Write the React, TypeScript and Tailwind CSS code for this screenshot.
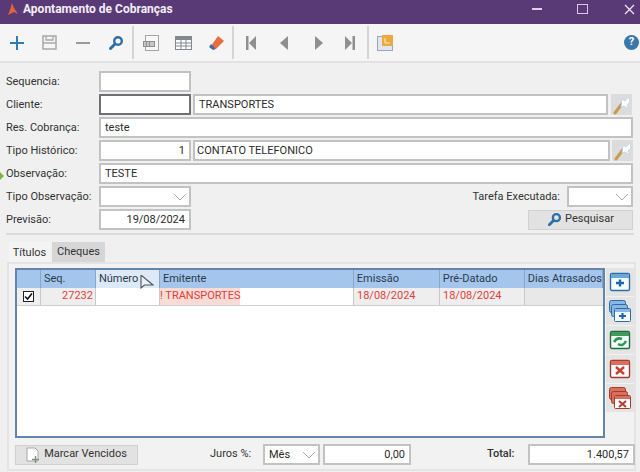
import type { ReactNode } from 'react';

function Sep({ className = '' }: { className?: string }) {
  return <div className={`h-[33px] w-[2px] shrink-0 bg-[#d4d4d4] ${className}`} />;
}

function ToolBtn({ children, className = 'w-[33px]' }: { children: ReactNode; className?: string }) {
  return <div className={`flex h-[37px] shrink-0 items-center justify-center ${className}`}>{children}</div>;
}

function Lupa({ size = 16, color = '#2f6ea5' }: { size?: number; color?: string }) {
  return (
    <svg width={size} height={size} viewBox="0 0 16 16">
      <circle cx="10" cy="6" r="3.8" fill="none" stroke={color} strokeWidth="2.4" />
      <path d="M7 9 L2.5 13.5" stroke={color} strokeWidth="3" strokeLinecap="round" />
    </svg>
  );
}

function Wand() {
  return (
    <div className="flex h-[21px] w-[21px] shrink-0 items-center justify-center bg-[#dcdcdc]">
      <svg width="20" height="20" viewBox="0 0 20 20">
        <path d="M3 18 L9 10" stroke="#c99a52" strokeWidth="3" strokeLinecap="round" />
        <path d="M9 10 L12 7" stroke="#7d8fa6" strokeWidth="3" />
        <path d="M10 4 L13 6 L17 2 L18 7 L15 10 L17 14 L12 11 L9 12 Z" fill="#ffffff" stroke="#b9d2ea" strokeWidth="0.8" />
      </svg>
    </div>
  );
}

function Chevron({ color = '#a9a9a9' }: { color?: string }) {
  return (
    <svg width="14" height="8" viewBox="0 0 14 8">
      <path d="M1 1 L7 7 L13 1" fill="none" stroke={color} strokeWidth="1" />
    </svg>
  );
}

function Field({
  children,
  className = '',
  border = 'border-[#c2c2c2]',
}: {
  children?: ReactNode;
  className?: string;
  border?: string;
}) {
  return (
    <div className={`flex h-full items-center border-2 bg-white px-[4px] pt-[1px] text-[#2b2b2b] ${border} ${className}`}>
      {children}
    </div>
  );
}

function Row({ label, children }: { label: string; children: ReactNode }) {
  return (
    <div className="relative flex h-[21px] items-center">
      <div className="w-[93px] shrink-0 pt-[2px] text-[#333]">{label}</div>
      {children}
    </div>
  );
}

function SideBtn({ children }: { children: ReactNode }) {
  return <div className="flex h-[28px] w-[28px] items-center justify-center bg-[#e4e4e4]">{children}</div>;
}

function WinIcon({ color, bar, children }: { color: string; bar: string; children?: ReactNode }) {
  return (
    <svg width="22" height="22" viewBox="0 0 22 22">
      <rect x="1.5" y="2.5" width="19" height="17" rx="1.5" fill="#f6fbff" stroke={color} strokeWidth="1.4" />
      <rect x="2" y="3" width="18" height="4" fill={bar} />
      {children}
    </svg>
  );
}

function StackIcon({ color, bar, children }: { color: string; bar: string; children?: ReactNode }) {
  return (
    <svg width="24" height="24" viewBox="0 0 24 24">
      <rect x="1.5" y="1.5" width="16" height="12" rx="2" fill={bar} stroke={color} />
      <rect x="3.5" y="5.5" width="16" height="12" rx="2" fill={bar} stroke={color} />
      <rect x="6.5" y="9.5" width="16" height="13" rx="1" fill="#f6fbff" stroke={color} />
      <rect x="7" y="10" width="15" height="3" fill={bar} />
      {children}
    </svg>
  );
}

const columns = [
  { label: '', width: 'w-[24px]' },
  { label: 'Seq.', width: 'w-[55px]' },
  { label: 'Número', width: 'w-[64px]' },
  { label: 'Emitente', width: 'w-[194px]' },
  { label: 'Emissão', width: 'w-[86px]' },
  { label: 'Pré-Datado', width: 'w-[85px]' },
  { label: 'Dias Atrasados', width: 'flex-1' },
];

export default function App() {
  return (
    <div className="flex h-[472px] w-[640px] flex-col overflow-hidden whitespace-nowrap bg-[#f0f0f0] font-['Roboto',sans-serif] text-[11px]">
      {/* barra de titulo */}
      <div className="flex h-[24px] shrink-0 items-center bg-[#5a3a76] pb-[6px] pl-[7px] text-white">
        <svg width="11" height="13" viewBox="0 0 11 13">
          <path d="M5 0 L7 5 L11 11 L7 9 L1 12 L3 7 Z" fill="#e0653a" />
        </svg>
        <span className="ml-[5px] text-[12px] font-bold text-[#f3eef7]">Apontamento de Cobranças</span>
        <div className="ml-auto flex items-center">
          <div className="mr-[35px] h-[2px] w-[10px] bg-[#ddd0e8]" />
          <div className="mr-[36px] h-[10px] w-[11px] border border-[#d9c8e8]" />
          <svg width="11" height="11" viewBox="0 0 11 11" className="mr-[5px]">
            <path d="M1 1 L10 10 M10 1 L1 10" stroke="#eee6f4" strokeWidth="1.3" />
          </svg>
        </div>
      </div>

      {/* toolbar */}
      <div className="flex h-[39px] shrink-0 items-center border-b-2 border-[#e2e2e2] bg-[#f5f5f5]">
        <ToolBtn>
          <svg width="16" height="16" viewBox="0 0 16 16">
            <path d="M8 1 V15 M1 8 H15" stroke="#2f7cb0" strokeWidth="2" />
          </svg>
        </ToolBtn>
        <ToolBtn>
          <svg width="15" height="15" viewBox="0 0 15 15">
            <path d="M1 1 H14 V14 H1 Z" fill="none" stroke="#a8a8a8" strokeWidth="1.5" />
            <path d="M4 1 V5 H11 V1 M1 8 H14" fill="none" stroke="#a8a8a8" strokeWidth="1.3" />
          </svg>
        </ToolBtn>
        <ToolBtn>
          <div className="h-[2px] w-[14px] bg-[#9a9a9a]" />
        </ToolBtn>
        <ToolBtn>
          <Lupa />
        </ToolBtn>
        <Sep />
        <ToolBtn>
          <svg width="17" height="16" viewBox="0 0 17 16">
            <rect x="3.5" y="0.5" width="13" height="15" fill="#f7f7f7" stroke="#a4a4a4" />
            <rect x="1" y="6" width="12" height="6" fill="#8f8f8f" />
            <path d="M3 7 V11 M6 7 V11 M9 7 V11 M11 7 V11" stroke="#fff" />
          </svg>
        </ToolBtn>
        <ToolBtn>
          <svg width="17" height="14" viewBox="0 0 17 14">
            <rect x="0.5" y="0.5" width="16" height="13" fill="#fff" stroke="#7f8a8f" />
            <rect x="1" y="1" width="15" height="3" fill="#7f8a8f" />
            <path d="M1 7 H16 M1 10 H16 M6 4 V13 M11 4 V13" stroke="#7f8a8f" />
          </svg>
        </ToolBtn>
        <ToolBtn className="w-[32px]">
          <svg width="17" height="16" viewBox="0 0 17 16">
            <path d="M10 1 L16 6 L8 14 L3 11 Z" fill="#e56f3c" />
            <path d="M3 9 L8 14 L5 15 L1 12 Z" fill="#3f6f9f" />
          </svg>
        </ToolBtn>
        <Sep />
        <ToolBtn className="w-[34px]">
          <svg width="12" height="14" viewBox="0 0 12 14">
            <path d="M1 0 H3.5 V14 H1 Z M11 0 V14 L4 7 Z" fill="#8f8f8f" />
          </svg>
        </ToolBtn>
        <ToolBtn className="w-[32px]">
          <svg width="8" height="14" viewBox="0 0 8 14">
            <path d="M8 0 V14 L0 7 Z" fill="#8f8f8f" />
          </svg>
        </ToolBtn>
        <ToolBtn className="w-[38px]">
          <svg width="8" height="14" viewBox="0 0 8 14">
            <path d="M0 0 V14 L8 7 Z" fill="#8f8f8f" />
          </svg>
        </ToolBtn>
        <ToolBtn className="w-[24px]">
          <svg width="12" height="14" viewBox="0 0 12 14">
            <path d="M1 0 V14 L8 7 Z M8.5 0 H11 V14 H8.5 Z" fill="#8f8f8f" />
          </svg>
        </ToolBtn>
        <Sep className="ml-[5px]" />
        <ToolBtn className="w-[32px]">
          <svg width="16" height="16" viewBox="0 0 16 16">
            <rect x="0.5" y="1.5" width="15" height="14" fill="#dfe6f0" stroke="#98a6ba" />
            <rect x="5" y="0" width="11" height="11" fill="#eda93f" />
            <path d="M8 3 V8 H13" fill="none" stroke="#fff3d6" />
          </svg>
        </ToolBtn>
        <div className="ml-auto mr-[1px] flex h-[15px] w-[15px] items-center justify-center rounded-full bg-[#3a78a8] text-[11px] font-bold text-white">
          ?
        </div>
      </div>

      {/* formulario */}
      <div className="flex shrink-0 flex-col gap-[2px] pl-[6px] pr-[7px] pt-[8px]">
        <Row label="Sequencia:">
          <div className="h-full w-[92px]"><Field /></div>
        </Row>
        <Row label="Cliente:">
          <div className="h-full w-[92px]"><Field border="border-[#6f6f78]" /></div>
          <div className="ml-[2px] h-full w-[415px]"><Field>TRANSPORTES</Field></div>
          <div className="ml-[3px]"><Wand /></div>
        </Row>
        <Row label="Res. Cobrança:">
          <div className="h-full flex-1"><Field>teste</Field></div>
        </Row>
        <Row label="Tipo Histórico:">
          <div className="h-full w-[92px]"><Field className="justify-end">1</Field></div>
          <div className="ml-[2px] h-full w-[417px]"><Field className="pl-[2px]">CONTATO TELEFONICO</Field></div>
          <div className="ml-[2px]"><Wand /></div>
        </Row>
        <Row label="Observação:">
          <svg width="4" height="8" viewBox="0 0 4 8" className="absolute -left-[6px] top-[9px]">
            <path d="M0 0 L4 4 L0 8 Z" fill="#7cb83c" />
          </svg>
          <div className="h-full flex-1"><Field>TESTE</Field></div>
        </Row>
        <Row label="Tipo Observação:">
          <div className="h-full w-[92px]"><Field className="justify-end pr-[2px]"><Chevron /></Field></div>
          <span className="ml-auto mr-[7px] pt-[2px] text-[#333]">Tarefa Executada:</span>
          <div className="h-full w-[66px]"><Field className="justify-end pr-[2px]"><Chevron /></Field></div>
        </Row>
        <Row label="Previsão:">
          <div className="h-full w-[92px]"><Field className="justify-end">19/08/2024</Field></div>
          <div className="ml-auto flex h-[20px] w-[105px] items-center justify-center gap-[3px] border border-[#d0d0d0] bg-[#e2e2e2] text-[#333]">
            <Lupa size={15} />
            Pesquisar
          </div>
        </Row>
      </div>
      <div className="mx-[6px] mt-[3px] h-[2px] shrink-0 bg-[#dcdcdc]" />

      {/* abas */}
      <div className="mt-[7px] flex h-[20px] shrink-0 items-stretch pl-[9px]">
        <div className="flex w-[41px] items-center justify-center bg-[#f4f4f4] pt-[2px] text-[#333]">Títulos</div>
        <div className="ml-[2px] flex w-[53px] items-center justify-center bg-[#d6d6d6] text-[#333]">Cheques</div>
      </div>
      <div className="ml-[7px] mr-[4px] flex min-h-0 flex-1 flex-col border-2 border-[#e4e4e4] bg-[#f2f2f2] pb-[3px] pl-[6px] pt-[4px]">
        <div className="flex h-[170px] shrink-0 gap-[1px]">
          <div className="flex w-[590px] shrink-0 flex-col border-2 border-[#6485aa] bg-white">
            <div className="flex h-[18px] bg-[#a4c6ec] text-[#2b3a4c]">
              {columns.map((col) => (
                <div
                  key={col.label || 'check'}
                  className={`flex items-center border-r border-[#8aa6c6] pl-[3px] ${col.width} ${col.label === 'Número' ? 'relative bg-[#dbe9f8]' : ''}`}
                >
                  {col.label}
                  {col.label === 'Número' && (
                    <svg width="14" height="14" viewBox="0 0 14 14" className="absolute left-[44px] top-[5px]">
                      <path d="M1 0 V13 L4.5 10 H13 Z" fill="#e8f0f8" stroke="#555" strokeWidth="1.1" />
                    </svg>
                  )}
                </div>
              ))}
            </div>
            <div className="flex h-[18px] border-b border-[#cfcfcf] text-[#e0403a]">
              <div className="flex w-[24px] items-center justify-center border-r border-[#c8c8c8] bg-[#eeeeee]">
                <div className="flex h-[11px] w-[11px] items-center justify-center border border-[#222] bg-white">
                  <svg width="9" height="9" viewBox="0 0 9 9">
                    <path d="M1 4.5 L3.5 7 L8 1.5" fill="none" stroke="#111" strokeWidth="1.6" />
                  </svg>
                </div>
              </div>
              <div className="flex w-[55px] items-center justify-end border-r border-[#c8c8c8] bg-[#eeeeee] pr-[2px]">27232</div>
              <div className="w-[64px] border-r border-[#c8c8c8]" />
              <div className="flex w-[194px] items-center border-r border-[#c8c8c8]">
                <span className="bg-[#f9dcd6]">! TRANSPORTES</span>
              </div>
              <div className="flex w-[86px] items-center border-r border-[#c8c8c8] bg-[#eeeeee] pl-[3px]">18/08/2024</div>
              <div className="flex w-[85px] items-center border-r border-[#c8c8c8] bg-[#eeeeee] pl-[3px]">18/08/2024</div>
              <div className="flex-1 bg-[#e8e8e8]" />
            </div>
          </div>
          <div className="flex flex-col gap-[1px]">
            <SideBtn>
              <WinIcon color="#2a6ea8" bar="#6aa8dc">
                <path d="M7 12 H15 M11 8.5 V15.5" stroke="#1a66b0" strokeWidth="2.4" />
              </WinIcon>
            </SideBtn>
            <SideBtn>
              <StackIcon color="#2a6ea8" bar="#8ab8e4">
                <path d="M11 17 H18 M14.5 14 V20" stroke="#1a66b0" strokeWidth="2.2" />
              </StackIcon>
            </SideBtn>
            <SideBtn>
              <WinIcon color="#1f6e3c" bar="#3f9a5c">
                <path d="M5 13 Q8 8 13 10 M17 12 Q14 18 9 15" fill="none" stroke="#2e9a4e" strokeWidth="2.6" />
              </WinIcon>
            </SideBtn>
            <SideBtn>
              <WinIcon color="#a83a2a" bar="#d8705c">
                <path d="M7 9 L15 16 M15 9 L7 16" stroke="#c8402c" strokeWidth="2.4" />
              </WinIcon>
            </SideBtn>
            <SideBtn>
              <StackIcon color="#a83a2a" bar="#d8705c">
                <path d="M11 15 L18 21 M18 15 L11 21" stroke="#b83a2a" strokeWidth="2" />
              </StackIcon>
            </SideBtn>
          </div>
        </div>
        <div className="mt-[6px] flex h-[21px] shrink-0 items-center">
          <div className="flex h-[20px] w-[123px] shrink-0 items-center justify-center gap-[4px] border border-[#d0d0d0] bg-[#e2e2e2] text-[#333]">
            <svg width="14" height="16" viewBox="0 0 14 16">
              <path d="M1 1 H9 L12 4 V14 H1 Z" fill="#fff" stroke="#a8a8a8" />
              <path d="M9.5 9 V16 M6 12.5 H13" stroke="#7f8f7f" strokeWidth="1.4" />
            </svg>
            Marcar Vencidos
          </div>
          <span className="ml-[72px] w-[44px] shrink-0 text-[#333]">Juros %:</span>
          <div className="ml-[9px] h-full w-[57px] shrink-0"><Field className="justify-between pr-[2px]">Mês<Chevron /></Field></div>
          <div className="ml-[3px] h-full w-[88px] shrink-0"><Field className="justify-end">0,00</Field></div>
          <span className="ml-[76px] w-[27px] shrink-0 font-medium text-[#333]">Total:</span>
          <div className="ml-[14px] h-full w-[107px] shrink-0"><Field className="justify-end">1.400,57</Field></div>
        </div>
      </div>
      <div className="h-[1px] shrink-0" />
    </div>
  );
}
